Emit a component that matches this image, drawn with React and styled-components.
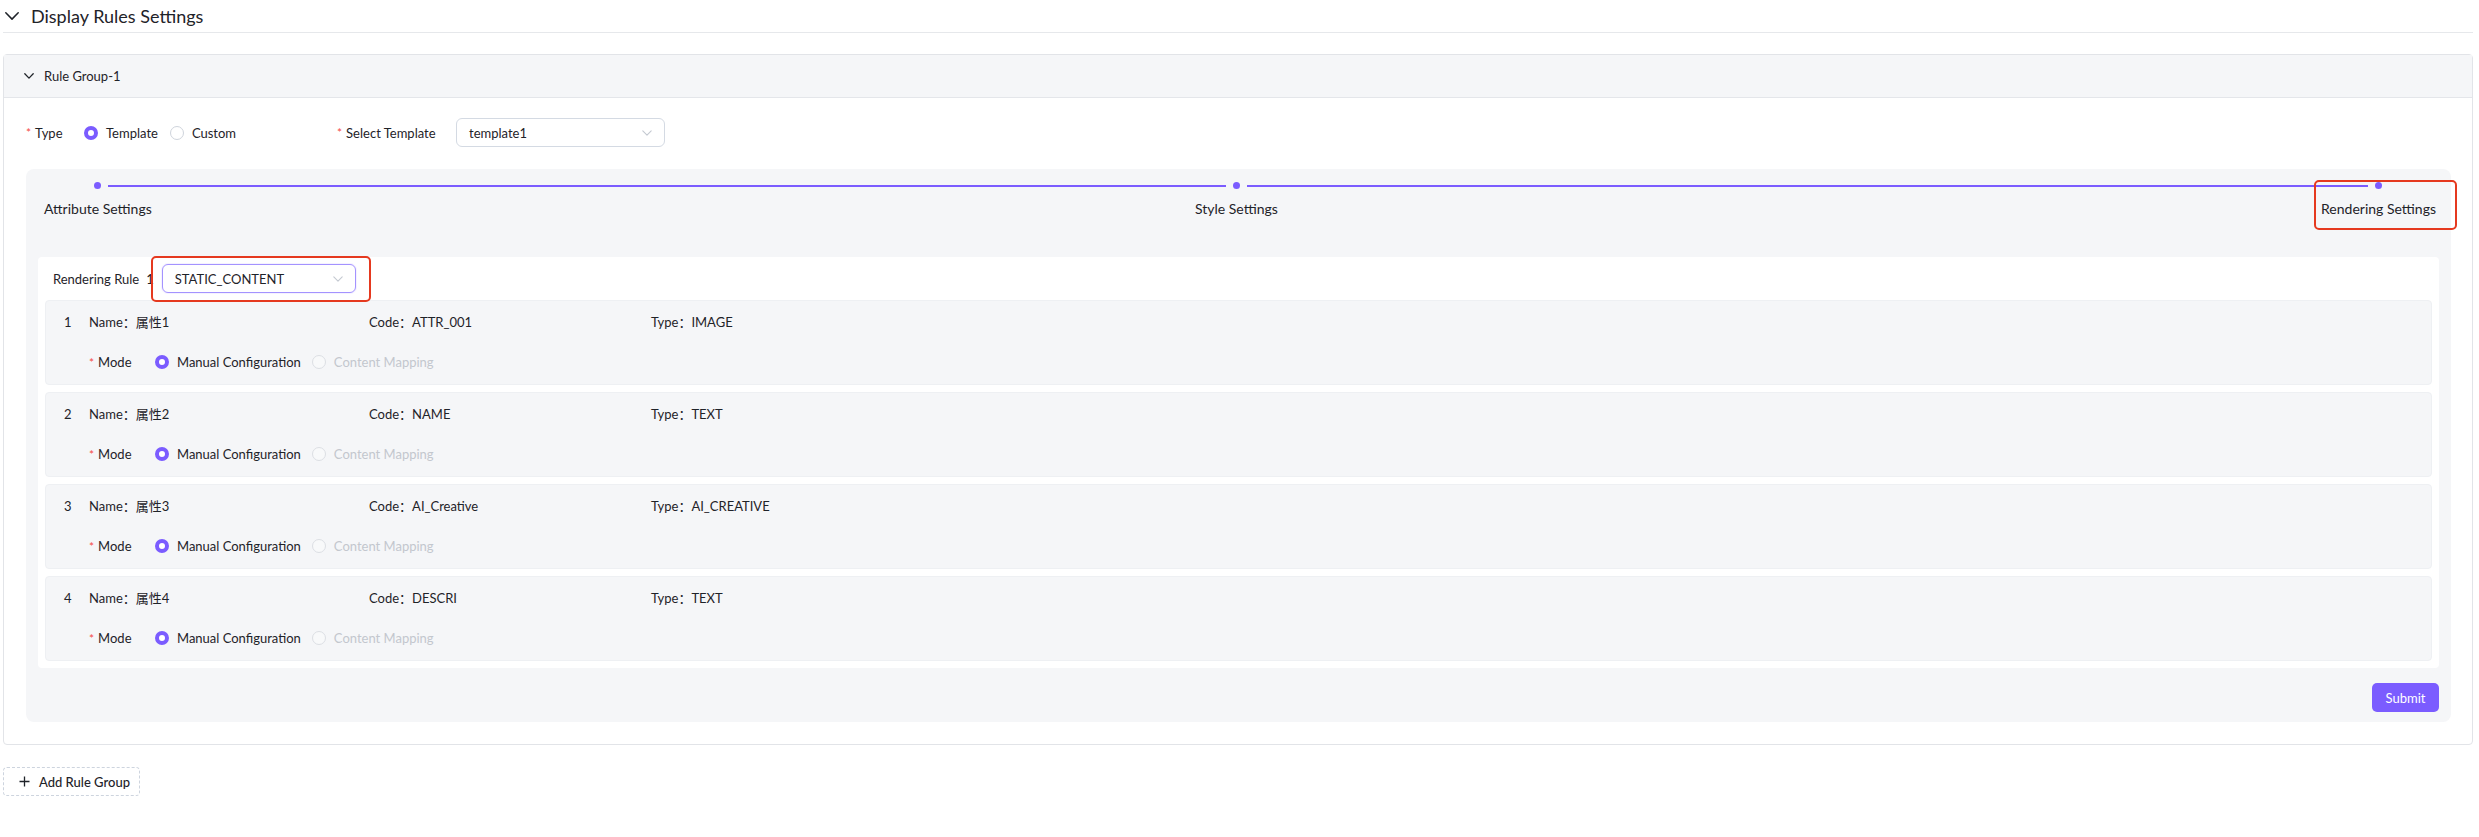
import React from 'react';
import styled, { createGlobalStyle } from 'styled-components';

const GlobalStyle = createGlobalStyle`
  body {
    margin: 0;
    background: #fff;
    font-family: Lato, "Noto Sans CJK SC", sans-serif;
    color: #1f2329;
  }
`;

const Page = styled.div`
  padding: 0 6px 0 3px;
`;

const Header = styled.div`
  display: flex;
  align-items: center;
  height: 32px;
  padding-left: 2px;
  border-bottom: 1px solid #e6e8eb;
  gap: 12px;
  font-size: 18px;
`;

const Card = styled.div`
  margin-top: 21px;
  border: 1px solid #e2e4e8;
  border-radius: 4px;
`;

const CardHeader = styled.div`
  display: flex;
  align-items: center;
  height: 42px;
  padding-left: 20px;
  gap: 10px;
  background: #f5f6f8;
  border-bottom: 1px solid #e4e6ea;
  font-size: 13px;
`;

const CardBody = styled.div`
  padding: 20px 21px 22px 22px;
`;

const FormRow = styled.div`
  display: flex;
  align-items: center;
  height: 29px;
`;

const FormItem = styled.div`
  display: flex;
  align-items: center;
  width: ${p => p.$width || 'auto'};
  font-size: 13px;
`;

const Label = styled.div`
  display: flex;
  align-items: center;
  min-width: ${p => p.$width}px;
  font-size: 13px;
  white-space: nowrap;
`;

const Star = styled.span`
  color: #f54a45;
  margin-right: 4px;
  font-size: 12px;
`;

const RadioOption = styled.label`
  display: flex;
  align-items: center;
  gap: 8px;
  margin-right: ${p => p.$spacing || 9}px;
  font-size: 13px;
  color: ${p => (p.$disabled ? '#c3c7ce' : '#1f2329')};
`;

const RadioCircle = styled.span`
  box-sizing: border-box;
  width: 14px;
  height: 14px;
  border-radius: 50%;
  background: ${p => (p.$disabled ? '#f8f9fa' : '#fff')};
  border: ${p => (p.$checked ? '4px solid #7b5cff' : `1px solid ${p.$disabled ? '#dcdfe4' : '#cfd4dc'}`)};
`;

const SelectBox = styled.div`
  box-sizing: border-box;
  display: flex;
  align-items: center;
  justify-content: space-between;
  width: ${p => p.$width}px;
  height: 29px;
  padding: 0 12px;
  border: 1px solid ${p => (p.$focused ? '#a493ff' : '#d4dae3')};
  border-radius: 6px;
  background: #fff;
  font-size: 13px;
  box-shadow: ${p => (p.$focused ? '0 0 0 1px rgba(123, 92, 255, 0.08)' : 'none')};
`;

const Highlight = styled.div`
  position: relative;
  &::after {
    content: '';
    position: absolute;
    top: ${p => p.$box[0]}px;
    right: ${p => p.$box[1]}px;
    bottom: ${p => p.$box[2]}px;
    left: ${p => p.$box[3]}px;
    border: 2px solid #e5391f;
    border-radius: 5px;
    pointer-events: none;
  }
`;

const StepsPanel = styled.div`
  margin-top: 22px;
  padding: 13px 12px 10px;
  background: #f5f6f8;
  border-radius: 8px;
`;

const StepsRow = styled.div`
  display: flex;
  padding: 0 3px 0 6px;
`;

const Step = styled.div`
  display: flex;
  flex-direction: column;
  align-items: center;
`;

const StepHead = styled.div`
  display: flex;
  align-items: center;
  align-self: stretch;
  height: 7px;
  gap: 7px;
`;

const Segment = styled.div`
  flex: 1;
  height: 2px;
  background: ${p => (p.$off ? 'transparent' : '#7b5cff')};
`;

const Dot = styled.div`
  width: 7px;
  height: 7px;
  border-radius: 50%;
  background: #7b5cff;
`;

const Connector = styled.div`
  flex: 1;
  height: 2px;
  margin-top: 2.5px;
  background: #7b5cff;
`;

const StepLabel = styled.div`
  margin-top: 10px;
  font-size: 14px;
  line-height: 20px;
  white-space: nowrap;
`;

const RenderCard = styled.div`
  margin-top: 38px;
  padding: 7px;
  background: #fff;
  border-radius: 4px;
`;

const RuleRow = styled.div`
  display: flex;
  align-items: center;
  height: 29px;
  padding-left: 8px;
  font-size: 13px;
`;

const RuleIndex = styled.span`
  margin: 0 8px 0 7px;
`;

const ItemList = styled.div`
  display: flex;
  flex-direction: column;
  gap: 7px;
  margin-top: 7px;
`;

const Item = styled.div`
  padding: 11px 18px 12px;
  background: #f5f6f8;
  border: 1px solid #eef0f3;
  border-radius: 4px;
  font-size: 13px;
`;

const InfoRow = styled.div`
  display: grid;
  grid-template-columns: 25px 280px 282px auto;
  line-height: 20px;
`;

const ModeRow = styled.div`
  display: flex;
  align-items: center;
  height: 20px;
  margin-top: 20px;
  padding-left: 25px;
`;

const Footer = styled.div`
  display: flex;
  justify-content: flex-end;
  margin-top: 15px;
`;

const SubmitButton = styled.button`
  width: 67px;
  height: 29px;
  border: none;
  border-radius: 5px;
  background: #7b5cff;
  color: #fff;
  font-family: inherit;
  font-size: 13px;
`;

const AddButton = styled.button`
  display: flex;
  align-items: center;
  gap: 9px;
  width: 137px;
  height: 29px;
  margin-top: 22px;
  padding: 0 0 0 15px;
  border: 1px dashed #cdd4de;
  border-radius: 4px;
  background: #fff;
  color: #1f2329;
  font-family: inherit;
  font-size: 13px;
  font-weight: 500;
`;

const Chevron = ({ w, h, color = '#1f2329', stroke = 1.4 }) => (
  <svg width={w} height={h} viewBox={`0 0 ${w} ${h}`} fill="none">
    <polyline
      points={`0.8,0.8 ${w / 2},${h - 0.9} ${w - 0.8},0.8`}
      stroke={color}
      strokeWidth={stroke}
      strokeLinecap="round"
      strokeLinejoin="round"
    />
  </svg>
);

const Plus = () => (
  <svg width="11" height="11" viewBox="0 0 11 11">
    <path d="M5.5 0.5v10M0.5 5.5h10" stroke="#1f2329" strokeWidth="1.3" />
  </svg>
);

const Radio = ({ checked, disabled, children, spacing }) => (
  <RadioOption $disabled={disabled} $spacing={spacing}>
    <RadioCircle $checked={checked} $disabled={disabled} />
    {children}
  </RadioOption>
);

const attributes = [
  { name: '属性1', code: 'ATTR_001', type: 'IMAGE' },
  { name: '属性2', code: 'NAME', type: 'TEXT' },
  { name: '属性3', code: 'AI_Creative', type: 'AI_CREATIVE' },
  { name: '属性4', code: 'DESCRI', type: 'TEXT' },
];

export default function App() {
  return (
    <Page>
      <GlobalStyle />
      <Header>
        <Chevron w={14} h={8} stroke={1.5} />
        Display Rules Settings
      </Header>

      <Card>
        <CardHeader>
          <Chevron w={10} h={6} stroke={1.3} />
          Rule Group-1
        </CardHeader>
        <CardBody>
          <FormRow>
            <FormItem $width="311px">
              <Label $width={58}><Star>*</Star>Type</Label>
              <Radio checked spacing={12}>Template</Radio>
              <Radio>Custom</Radio>
            </FormItem>
            <FormItem>
              <Label $width={119}><Star>*</Star>Select Template</Label>
              <SelectBox $width={209}>
                template1
                <Chevron w={10} h={6} color="#c4c9d1" stroke={1.1} />
              </SelectBox>
            </FormItem>
          </FormRow>

          <StepsPanel>
            <StepsRow>
              <Step>
                <StepHead>
                  <Segment $off />
                  <Dot />
                  <Segment />
                </StepHead>
                <StepLabel>Attribute Settings</StepLabel>
              </Step>
              <Connector />
              <Step>
                <StepHead>
                  <Segment />
                  <Dot />
                  <Segment />
                </StepHead>
                <StepLabel>Style Settings</StepLabel>
              </Step>
              <Connector />
              <Step>
                <StepHead>
                  <Segment />
                  <Dot />
                  <Segment $off />
                </StepHead>
                <Highlight $box={[-9, -21, -11, -7]}>
                  <StepLabel>Rendering Settings</StepLabel>
                </Highlight>
              </Step>
            </StepsRow>

            <RenderCard>
              <RuleRow>
                Rendering Rule
                <RuleIndex>1</RuleIndex>
                <Highlight $box={[-8, -15, -9, -11]}>
                  <SelectBox $width={194} $focused>
                    STATIC_CONTENT
                    <Chevron w={10} h={6} color="#c4c9d1" stroke={1.1} />
                  </SelectBox>
                </Highlight>
              </RuleRow>
              <ItemList>
                {attributes.map((a, i) => (
                  <Item key={a.code}>
                    <InfoRow>
                      <span>{i + 1}</span>
                      <span>Name：{a.name}</span>
                      <span>Code：{a.code}</span>
                      <span>Type：{a.type}</span>
                    </InfoRow>
                    <ModeRow>
                      <Label $width={66}><Star>*</Star>Mode</Label>
                      <Radio checked spacing={11}>Manual Configuration</Radio>
                      <Radio disabled>Content Mapping</Radio>
                    </ModeRow>
                  </Item>
                ))}
              </ItemList>
            </RenderCard>

            <Footer>
              <SubmitButton>Submit</SubmitButton>
            </Footer>
          </StepsPanel>
        </CardBody>
      </Card>

      <AddButton>
        <Plus />
        Add Rule Group
      </AddButton>
    </Page>
  );
}
